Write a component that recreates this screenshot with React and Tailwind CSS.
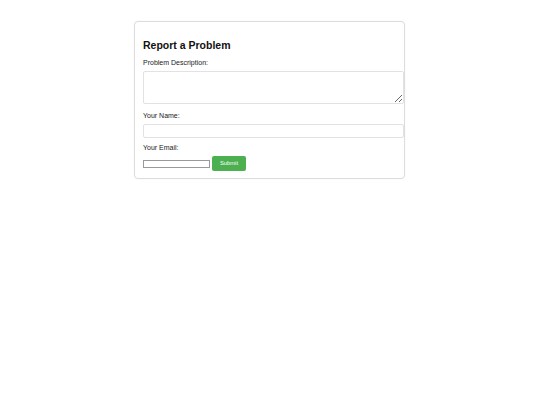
import React from 'react';

export default function App() {
  return (
    <div className="min-h-screen bg-white pt-[21px] font-['Liberation_Sans',Arial,sans-serif] text-[#222]">
      <div className="ml-[134px] w-[271px] rounded-[4px] border border-[#ddd] bg-white pt-[6px] pr-[8px] pb-[7px] pl-[8px] shadow-[0_0_2px_rgba(0,0,0,0.06)]">
        <h2 className="mt-[11px] text-[10.5px] leading-[12px] font-bold text-[#111]">Report a Problem</h2>

        <form className="flex flex-col" onSubmit={(e) => e.preventDefault()}>
          {/* Description */}
          <label className="mt-[8px] block text-[7px] leading-[8px]">Problem Description:</label>
          <textarea className="mt-[4px] block h-[33px] w-[261px] resize-y rounded-[2px] border border-[#e2e2e2] p-[4px] text-[7px]" />

          {/* Name */}
          <label className="mt-[8px] block text-[7px] leading-[8px]">Your Name:</label>
          <input type="text" className="mt-[4px] block h-[14px] w-[261px] rounded-[2px] border border-[#e2e2e2] px-[4px] text-[7px]" />

          {/* Email + submit */}
          <label className="mt-[5.5px] block text-[7px] leading-[8px]">Your Email:</label>
          <div className="mt-[4.5px] flex items-center gap-[2px]">
            <input type="email" className="h-[8px] w-[67px] border border-[#9a9a9a] text-[6px]" />
            <button type="submit" className="h-[15px] w-[34px] rounded-[2px] bg-[#4caf50] text-[5.8px] leading-[15px] text-white">
              Submit
            </button>
          </div>
        </form>
      </div>
    </div>
  );
}
